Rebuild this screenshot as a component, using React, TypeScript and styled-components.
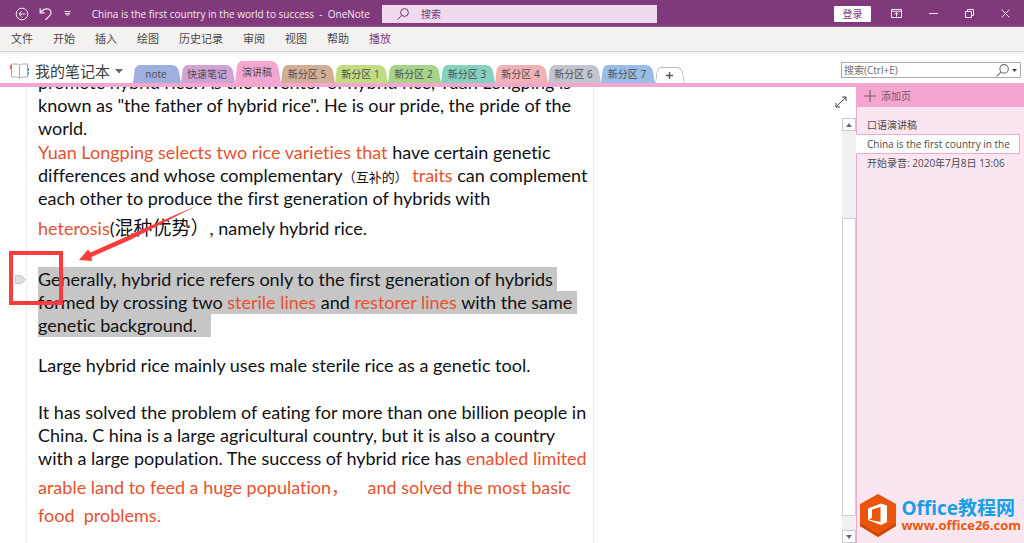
import React from "react";
import styled, { createGlobalStyle, css } from "styled-components";

const purple = "#80397b";
const pink = "#f3a7d0";
const uiFont = '"Open Sans", "Noto Sans CJK SC", sans-serif';

const GlobalStyle = createGlobalStyle`
  * { box-sizing: border-box; }
  body { margin: 0; background: #fff; font-family: ${uiFont}; }
  button, input { font-family: inherit; }
  button { border: 0; padding: 0; background: none; cursor: pointer; }
  svg { display: block; }
`;

const Window = styled.div`
  display: flex;
  flex-direction: column;
  height: 100vh;
  overflow: hidden;
`;

const TitleBar = styled.header`
  flex: none;
  display: grid;
  grid-template-columns: 370px 1fr 332px;
  align-items: center;
  height: 27px;
  background: ${purple};
  color: #f6e9f5;
`;

const TitleLeft = styled.div`
  display: flex;
  align-items: center;
  padding-left: 15px;
`;

const IconButton = styled.button<{ $w: number }>`
  width: ${(p) => p.$w}px;
  display: flex;
  align-items: center;
  color: inherit;
`;

const DocTitle = styled.h1`
  margin: 0;
  font-size: 10px;
  line-height: 16px;
  font-weight: 400;
  white-space: pre;
`;

const TitleSearch = styled.label`
  display: flex;
  align-items: center;
  gap: 12px;
  height: 18px;
  margin: 0 35px 0 12px;
  padding-left: 15px;
  background: #f0d9ee;
  color: #6d3a69;
`;

const BareInput = styled.input`
  flex: 1;
  min-width: 0;
  border: 0;
  padding: 0;
  outline: 0;
  background: transparent;
  font-size: 10px;
  line-height: 16px;
  color: inherit;
  &::placeholder { color: inherit; opacity: 1; }
`;

const WindowControls = styled.div`
  display: flex;
  align-items: center;
  justify-content: flex-end;
  padding-right: 14px;
  gap: 27px;
`;

const SignIn = styled.button`
  width: 37px;
  height: 16px;
  border-radius: 1px;
  background: #fff;
  color: ${purple};
  font-size: 10px;
  line-height: 16px;
  margin-right: -7px;
`;

const MenuBar = styled.nav`
  flex: none;
  display: flex;
  gap: 20px;
  height: 25px;
  padding: 0 11px;
  background: #f3f2f1;
  border-bottom: 1px solid #d8d6d5;
  box-shadow: 0 1px 3px #e4e4e4;
`;

const MenuItem = styled.button<{ $active?: boolean }>`
  font-size: 11px;
  line-height: 24px;
  color: ${(p) => (p.$active ? "#80397b" : "#484644")};
`;

const SectionBar = styled.div`
  flex: none;
  display: flex;
  align-items: flex-end;
  height: 35px;
  border-bottom: 4px solid ${pink};
`;

const Notebook = styled.button`
  display: flex;
  align-items: center;
  width: 133px;
  height: 24px;
  padding-left: 10px;
  gap: 5px;
  font-size: 15px;
  line-height: 20px;
  color: #3b3b3b;
  white-space: nowrap;
`;

const Tab = styled.button<{ $w: number; $bg: string; $active?: boolean; $add?: boolean }>`
  position: relative;
  isolation: isolate;
  width: ${(p) => p.$w}px;
  height: ${(p) => (p.$active ? 22 : p.$add ? 16 : 18)}px;
  font-size: 10px;
  line-height: ${(p) => (p.$active ? 22 : 18)}px;
  color: #4c4c52;
  white-space: nowrap;
  padding-right: 2px;
  &::before,
  &::after {
    content: "";
    position: absolute;
    z-index: -1;
    top: 0;
    bottom: 0;
    background: ${(p) => p.$bg};
  }
  &::before {
    left: 0;
    right: 50%;
    border-radius: 5px 0 0 0;
    transform: skewX(-7deg);
    transform-origin: bottom left;
  }
  &::after {
    left: 40%;
    right: 0;
    border-radius: 0 6px 0 0;
    transform: skewX(10deg);
    transform-origin: bottom right;
  }
  ${(p) =>
    p.$add &&
    css`
      &::before { border: 1px solid #b9b9b9; border-width: 1px 0 0 1px; }
      &::after { border: 1px solid #b9b9b9; border-width: 1px 1px 0 0; }
      svg { margin: 0 auto; }
    `}
`;

const PageSearch = styled.label`
  display: flex;
  align-items: center;
  width: 180px;
  height: 16px;
  margin: 0 3px 5px auto;
  padding: 0 3px 0 2px;
  border: 1px solid #ababab;
  color: #6c6c6c;
`;

const Body = styled.div`
  position: relative;
  flex: 1;
  min-height: 0;
  display: flex;
`;

const Canvas = styled.main`
  position: relative;
  flex: 1;
  min-width: 0;
  overflow: hidden;
`;

const Note = styled.article`
  width: 568px;
  min-height: calc(100% + 16px);
  margin: -16px 0 0 26px;
  border: 1px solid #ececec;
  border-width: 0 1px;
  padding-left: 11px;
  font-family: Lato, "Noto Sans CJK SC", sans-serif;
  font-size: 18px;
  line-height: 23px;
  font-variant-ligatures: none;
  color: #111;
  white-space: pre;
`;

const Para = styled.p<{ $top?: number }>`
  margin: ${(p) => p.$top ?? 1}px 0 0;
`;

const TallLine = styled.span<{ $h: number }>`
  display: block;
  line-height: ${(p) => p.$h}px;
`;

const Red = styled.span`
  color: #e8502d;
`;

const Small = styled.span`
  font-size: 13px;
  line-height: 1;
`;

const Hanzi = styled.span`
  font-size: 19px;
  line-height: 1;
`;

const Selected = styled.span`
  display: block;
  width: fit-content;
  height: 24px;
  line-height: 24px;
  background: #c6c6c6;
  & + & { height: 23px; line-height: 23px; }
`;

const Annotation = styled.svg`
  position: absolute;
  left: 0;
  top: 113px;
`;

const Expand = styled.button`
  position: absolute;
  right: 177px;
  top: 9px;
`;

const Scrollbar = styled.div`
  flex: none;
  display: flex;
  flex-direction: column;
  width: 14px;
  margin-top: 31px;
  background: #f0f0f0;
`;

const ScrollButton = styled.button`
  display: grid;
  place-items: center;
  height: 13px;
  flex: none;
  background: #fff;
  border: 1px solid #c9c9c9;
`;

const Thumb = styled.div`
  flex: 297;
  border: 1px solid #cfcfcf;
  background: #fff;
`;

const Track = styled.div<{ $grow: number }>`
  flex: ${(p) => p.$grow};
`;

const Pages = styled.aside`
  flex: none;
  width: 168px;
  background: #fbe5f1;
  border-left: 1px solid ${pink};
`;

const AddPage = styled.button`
  display: flex;
  align-items: center;
  gap: 5px;
  width: 100%;
  height: 20px;
  padding: 0 0 3px 7px;
  background: ${pink};
  color: #75546a;
  font-size: 10px;
  line-height: 16px;
`;

const PageList = styled.ul`
  list-style: none;
  margin: 9px 0 0;
  padding: 0;
`;

const PageItem = styled.li<{ $active?: boolean }>`
  height: 18px;
  margin: 0 4px 0 -1px;
  padding-left: 11px;
  ${(p) =>
    p.$active &&
    css`
      height: 20px;
      background: #fff;
      border: 1px solid ${pink};
      border-left-color: #fff;
      padding-left: 10px;
    `}
`;

const PageLink = styled.a`
  display: block;
  font-size: 10px;
  line-height: 18px;
  color: #4a4a4a;
  text-decoration: none;
  white-space: nowrap;
`;

const Brand = styled.a`
  position: absolute;
  right: 3px;
  bottom: 6px;
  display: flex;
  align-items: center;
  gap: 5px;
  text-decoration: none;
  font-weight: 700;
  white-space: nowrap;
`;

const BrandText = styled.span`
  display: flex;
  flex-direction: column;
`;

const BrandName = styled.span`
  font-size: 19px;
  line-height: 20px;
  color: #159fe6;
`;

const BrandUrl = styled.span`
  font-size: 13px;
  line-height: 15px;
  color: #e9590c;
`;

const Magnifier = ({ size }: { size: number }) => (
  <svg width={size} height={size} viewBox="0 0 12 12" fill="none" stroke="currentColor">
    <circle cx="7.5" cy="4.5" r="3.9" />
    <path d="M4.8 7.3 .6 11.5" />
  </svg>
);

const menus = ["文件", "开始", "插入", "绘图", "历史记录", "审阅", "视图", "帮助", "播放"];

const tabs = [
  { name: "note", w: 48, bg: "#9fb0e0" },
  { name: "快速笔记", w: 54, bg: "#d0a3d5" },
  { name: "演讲稿", w: 46, bg: pink, active: true },
  { name: "新分区 5", w: 54, bg: "#d3ae96" },
  { name: "新分区 1", w: 53, bg: "#c0dc80" },
  { name: "新分区 2", w: 53, bg: "#a7d48a" },
  { name: "新分区 3", w: 54, bg: "#85d1c0" },
  { name: "新分区 4", w: 53, bg: "#f2b2b3" },
  { name: "新分区 6", w: 53, bg: "#c1c5cd" },
  { name: "新分区 7", w: 54, bg: "#98bde6" },
];

const pages = [
  { title: "口语演讲稿" },
  { title: "China is the first country in the", active: true },
  { title: "开始录音: 2020年7月8日 13:06" },
];

export default function App() {
  return (
    <Window>
      <GlobalStyle />
      <TitleBar>
        <TitleLeft>
          <IconButton $w={24} aria-label="返回">
            <svg width="14" height="14" viewBox="0 0 14 14" fill="none" stroke="currentColor">
              <circle cx="7" cy="7" r="5.8" />
              <path d="M10.3 7H4M6.6 4.3 3.9 7l2.7 2.7" />
            </svg>
          </IconButton>
          <IconButton $w={26} aria-label="撤消">
            <svg width="13" height="14" viewBox="0 0 13 14" fill="none" stroke="currentColor" strokeWidth="1.2">
              <path d="M1.2 1.2v4.6h4.6M1.4 5.6C3.5 2.8 5.8 1.6 8.2 1.8c2.4.2 4 2 3.8 4.2-.1 1.3-.8 2.2-1.8 3.2L6.4 13" />
            </svg>
          </IconButton>
          <IconButton $w={28} aria-label="自定义快速访问工具栏">
            <svg width="7" height="6" viewBox="0 0 7 6" fill="none" stroke="currentColor">
              <path d="M.5.5h6M1.2 2.5h4.6L3.5 4.8z" />
            </svg>
          </IconButton>
          <DocTitle>China is the first country in the world to success  -  OneNote</DocTitle>
        </TitleLeft>
        <TitleSearch>
          <Magnifier size={12} />
          <BareInput placeholder="搜索" aria-label="搜索" />
        </TitleSearch>
        <WindowControls>
          <SignIn>登录</SignIn>
          <IconButton $w={11} aria-label="功能区显示选项">
            <svg width="11" height="9" viewBox="0 0 11 9" fill="none" stroke="currentColor">
              <path d="M.5.5h10v8H.5zM.5 2.3h10M5.500 7.6V3.6M3.6 5.4l1.9-1.9 1.9 1.9" />
            </svg>
          </IconButton>
          <IconButton $w={9} aria-label="最小化">
            <svg width="9" height="9" viewBox="0 0 9 9" stroke="currentColor">
              <path d="M0 4.5h9" />
            </svg>
          </IconButton>
          <IconButton $w={9} aria-label="还原">
            <svg width="9" height="9" viewBox="0 0 9 9" fill="none" stroke="currentColor">
              <path d="M.5 2.5h6v6h-6zM2.5 2.5v-2h6v6h-2" />
            </svg>
          </IconButton>
          <IconButton $w={9} aria-label="关闭">
            <svg width="9" height="9" viewBox="0 0 9 9" stroke="currentColor">
              <path d="m.6.6 7.8 7.8M8.4.6.6 8.4" />
            </svg>
          </IconButton>
        </WindowControls>
      </TitleBar>

      <MenuBar>
        {menus.map((m) => (
          <MenuItem key={m} $active={m === "播放"}>{m}</MenuItem>
        ))}
      </MenuBar>

      <SectionBar>
        <Notebook>
          <svg width="20" height="16" viewBox="0 0 20 16" fill="none" stroke="#a9a9a9">
            <path d="M9.500 2.200C8.500 1.200 7 1 5.500 1h-4v13h4c1.600 0 3 .2 4 1.200 1-1 2.400-1.200 4-1.200h4V1h-4c-1.500 0-3 .2-4 1.200zM9.500 2.200v13" />
            <path d="M.8 2v4" stroke="#e2583e" strokeWidth="1.4" />
            <path d="M18.300 5v3" stroke="#4f86c9" strokeWidth="1.4" />
            <path d="M18.300 9v3" stroke="#59b58b" strokeWidth="1.4" />
          </svg>
          我的笔记本
          <svg width="8" height="5" viewBox="0 0 8 5">
            <path d="M0 0h8L4 4.600z" fill="#666" />
          </svg>
        </Notebook>
        {tabs.map((t) => (
          <Tab key={t.name} $w={t.w} $bg={t.bg} $active={t.active}>{t.name}</Tab>
        ))}
        <Tab $w={30} $bg="#fff" $add aria-label="新建分区">
          <svg width="7" height="7" viewBox="0 0 7 7" stroke="#555" strokeWidth="1.4">
            <path d="M3.500 0v7M0 3.500h7" />
          </svg>
        </Tab>
        <PageSearch>
          <BareInput placeholder="搜索(Ctrl+E)" aria-label="搜索(Ctrl+E)" />
          <Magnifier size={13} />
          <svg width="8" height="3" viewBox="0 0 8 3">
            <path d="M3 0h5L5.500 3z" fill="#444" />
          </svg>
        </PageSearch>
      </SectionBar>

      <Body>
        <Canvas>
          <Note>
            <Para $top={0}>
              promote hybrid rice. As the inventor of hybrid rice, Yuan Longping is{"\n"}
              known as "the father of hybrid rice". He is our pride, the pride of the{"\n"}
              world.
            </Para>
            <Para>
              <Red>Yuan Longping selects two rice varieties that</Red> have certain genetic{"\n"}
              differences and whose complementary<Small>（互补的）</Small> <Red>traits</Red> can complement{"\n"}
              each other to produce the first generation of hybrids with
              <TallLine $h={36}>
                <Red>heterosis</Red>(<Hanzi>混种优势）</Hanzi>, namely hybrid rice.
              </TallLine>
            </Para>
            <Para $top={21}>
              <Selected>Generally, hybrid rice refers only to the first generation of hybrids </Selected>
              <Selected>
                formed by crossing two <Red>sterile lines</Red> and <Red>restorer lines</Red> with the same{" "}
              </Selected>
              <Selected>{"genetic background.   "}</Selected>
            </Para>
            <Para $top={17}>Large hybrid rice mainly uses male sterile rice as a genetic tool.</Para>
            <Para $top={24}>
              It has solved the problem of eating for more than one billion people in{"\n"}
              China. C hina is a large agricultural country, but it is also a country{"\n"}
              with a large population. The success of hybrid rice has <Red>enabled limited</Red>
              <Red>
                <TallLine $h={34}>arable land to feed a huge population，    and solved the most basic</TallLine>
                <TallLine $h={23}>{"food  problems."}</TallLine>
              </Red>
            </Para>
          </Note>
          <Annotation width="210" height="110" viewBox="0 200 210 110">
            <path d="M15.500 275.500h6l4 4-4 4h-6z" fill="#dedede" stroke="#c9c9c9" />
            <rect x="11" y="253" width="50" height="50" fill="none" stroke="#fb3c3c" strokeWidth="4" />
            <path d="M197 205.500 150 226 90.500 252.500 88 249.500 79 260 92 261 91.500 257 130 240z" fill="#fb3c3c" />
          </Annotation>
        </Canvas>

        <Scrollbar>
          <ScrollButton aria-label="向上滚动">
            <svg width="6" height="4" viewBox="0 0 6 4"><path d="M0 4h6L3 0z" fill="#666" /></svg>
          </ScrollButton>
          <Track $grow={87} />
          <Thumb />
          <Track $grow={14} />
          <ScrollButton aria-label="向下滚动">
            <svg width="6" height="4" viewBox="0 0 6 4"><path d="M0 0h6L3 4z" fill="#666" /></svg>
          </ScrollButton>
        </Scrollbar>

        <Pages>
          <AddPage>
            <svg width="12" height="12" viewBox="0 0 12 12" stroke="#75546a">
              <path d="M6 0v12M0 6h12" />
            </svg>
            添加页
          </AddPage>
          <PageList>
            {pages.map((p) => (
              <PageItem key={p.title} $active={p.active}>
                <PageLink href="#">{p.title}</PageLink>
              </PageItem>
            ))}
          </PageList>
        </Pages>

        <Expand aria-label="全屏">
          <svg width="12" height="12" viewBox="0 0 12 12" fill="none" stroke="#444">
            <path d="M1 11 11 1M7 1h4v4M1 7v4h4" />
          </svg>
        </Expand>
      </Body>

      <Brand href="#">
        <svg width="36" height="43" viewBox="0 0 36 43">
          <path d="M18 0 36 10v22L18 43 0 32V10z" fill="#e9560b" />
          <path d="M0 32 18 43 36 32v-3L18 40 0 29z" fill="#c94806" />
          <path
            d="M8 14.500 21 9.500 27 11.500V28L21 31 8 26zM12 15.500 20.500 13V28L8.500 25.500 12 24z"
            fill="#fff"
            fillRule="evenodd"
          />
        </svg>
        <BrandText>
          <BrandName>Office教程网</BrandName>
          <BrandUrl>www.office26.com</BrandUrl>
        </BrandText>
      </Brand>
    </Window>
  );
}
